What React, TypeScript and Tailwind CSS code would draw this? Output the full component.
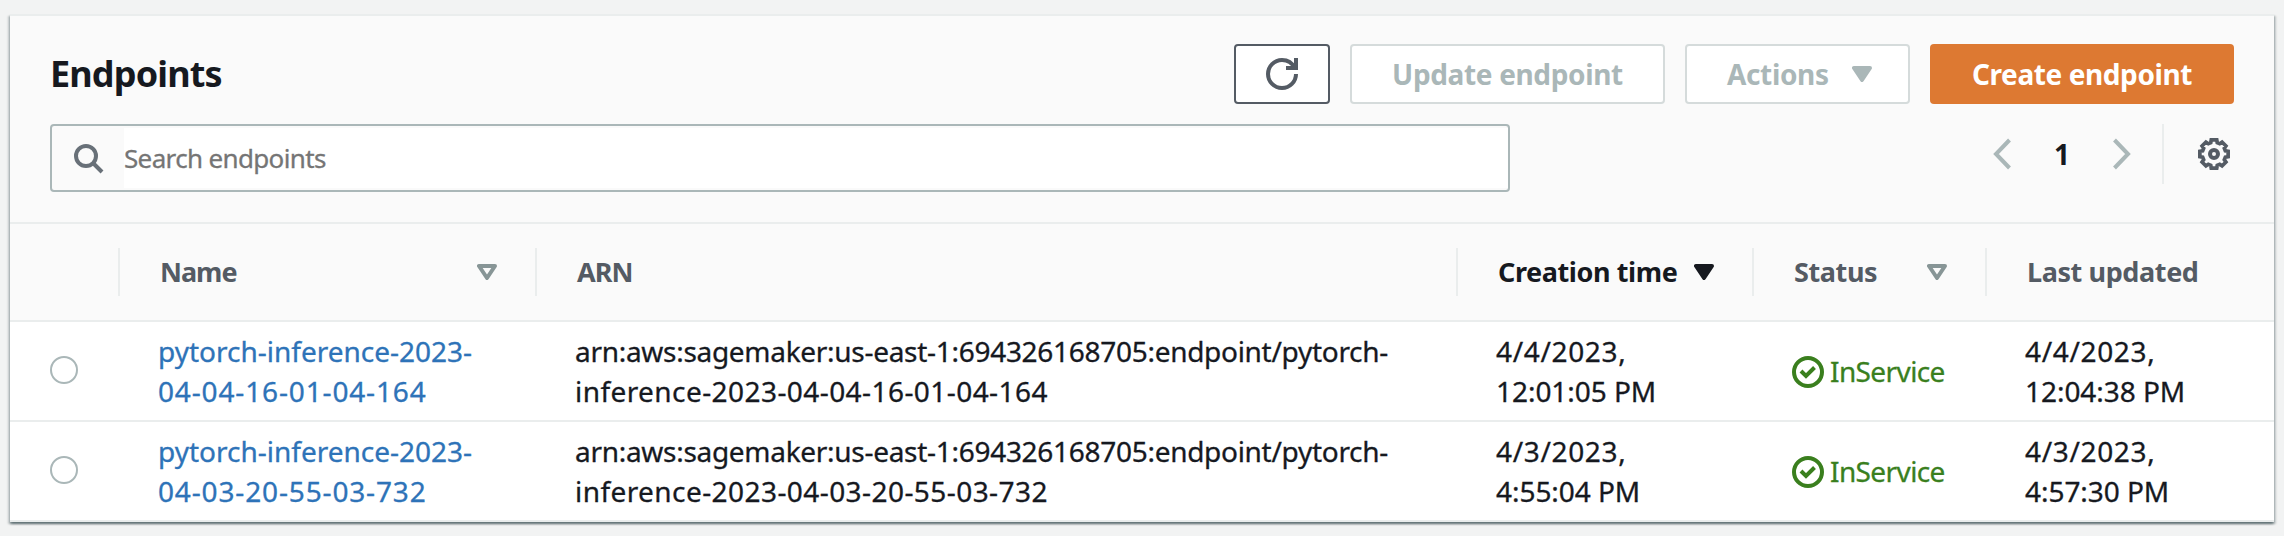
import type { ReactNode } from "react";

const columns = "grid grid-cols-[108px_417px_921px_296px_233px_289px]";

function RefreshIcon() {
  return (
    <svg className="size-8" viewBox="0 0 16 16" fill="none" stroke="#545b64" strokeWidth="2">
      <path d="M15 8c0 3.87-3.13 7-7 7s-7-3.13-7-7 3.13-7 7-7c2.79 0 5.2 1.63 6.33 4" />
      <path d="M10 5h5V0" />
    </svg>
  );
}

function SearchIcon() {
  return (
    <svg className="size-8" viewBox="0 0 32 32" fill="none" stroke="#687078" strokeWidth="4">
      <circle cx="14" cy="14" r="10" />
      <path d="M21 21l9 9" />
    </svg>
  );
}

function ChevronIcon({ flipped = false }: { flipped?: boolean }) {
  return (
    <svg
      className={flipped ? "h-8 w-5 -scale-x-100" : "h-8 w-5"}
      viewBox="0 0 20 32"
      fill="none"
      stroke="#aab7b8"
      strokeWidth="4"
    >
      <path d="M17.5 2L4 16l13.5 14" />
    </svg>
  );
}

const gearPoints = Array.from({ length: 8 }, (_, i) =>
  [
    [-11, 14.4],
    [11, 14.4],
    [16, 11.8],
    [29, 11.8],
  ].map(([offset, radius]) => {
    const angle = ((i * 45 + offset - 90) * Math.PI) / 180;
    return `${(16 + radius * Math.cos(angle)).toFixed(2)},${(16 + radius * Math.sin(angle)).toFixed(2)}`;
  }),
)
  .flat()
  .join(" ");

function GearIcon() {
  return (
    <svg className="size-8" viewBox="0 0 32 32" fill="none" stroke="#545b64" strokeWidth="4">
      <polygon points={gearPoints} strokeWidth="3.7" />
      <circle cx="16" cy="16" r="4" />
    </svg>
  );
}

function SortIcon({ active = false }: { active?: boolean }) {
  return (
    <svg
      className={active ? "h-4 w-5 text-[#16191f]" : "h-4 w-5 text-[#879596]"}
      viewBox="0 0 20 16"
      fill={active ? "currentColor" : "none"}
      stroke="currentColor"
      strokeWidth="4"
      strokeLinejoin="round"
    >
      <path d="M2 2h16l-8 12z" />
    </svg>
  );
}

function CheckIcon() {
  return (
    <svg className="mt-0.5 size-8" viewBox="0 0 32 32" fill="none" stroke="#3a7f1e" strokeWidth="4">
      <circle cx="16" cy="16" r="14" />
      <path d="M9 15l5 5 8.5-8.5" />
    </svg>
  );
}

function HeaderCell({ children, icon, muted = true }: { children: ReactNode; icon?: ReactNode; muted?: boolean }) {
  return (
    <div
      className={`flex h-12 items-center justify-between border-l-2 border-[#eaeded] pl-10 text-[27px] leading-10 font-bold ${muted ? "text-[#545b64]" : "text-[#16191f]"}`}
    >
      {children}
      {icon && <div className="mr-[38px]">{icon}</div>}
    </div>
  );
}

const endpoints = [
  {
    name: ["pytorch-inference-2023-", "04-04-16-01-04-164"],
    arn: ["arn:aws:sagemaker:us-east-1:694326168705:endpoint/pytorch-", "inference-2023-04-04-16-01-04-164"],
    created: ["4/4/2023,", "12:01:05 PM"],
    updated: ["4/4/2023,", "12:04:38 PM"],
  },
  {
    name: ["pytorch-inference-2023-", "04-03-20-55-03-732"],
    arn: ["arn:aws:sagemaker:us-east-1:694326168705:endpoint/pytorch-", "inference-2023-04-03-20-55-03-732"],
    created: ["4/3/2023,", "4:55:04 PM"],
    updated: ["4/3/2023,", "4:57:30 PM"],
  },
];

function Lines({
  lines,
  className = "",
  first = "",
  last = "",
}: {
  lines: string[];
  className?: string;
  first?: string;
  last?: string;
}) {
  return (
    <div className={`pl-10 ${className}`}>
      <div className={first}>{lines[0]}</div>
      <div className={last}>{lines[1]}</div>
    </div>
  );
}

export default function App() {
  return (
    <div className="h-[536px] w-[2284px] bg-[#f2f3f3] px-2.5 pt-3.5 font-['Noto_Sans',sans-serif] whitespace-nowrap text-[#16191f]">
      <div className="border-t-2 border-[#eaeded] bg-white shadow-[0_2px_2px_0_rgba(0,28,36,0.4),2px_2px_2px_0_rgba(0,28,36,0.18),-2px_2px_2px_0_rgba(0,28,36,0.18)]">
        <div className="border-b-2 border-[#eaeded] bg-[#fafafa] px-10 pt-7 pb-[30px]">
          <div className="flex h-[60px] items-center justify-between">
            <h1 className="text-[36px] leading-[60px] font-bold tracking-[-0.85px]">Endpoints</h1>
            <div className="flex gap-5 text-[28px] font-bold">
              <button className="flex h-[60px] w-24 items-center justify-center rounded-sm border-2 border-[#545b64] bg-white">
                <RefreshIcon />
              </button>
              <button className="flex h-[60px] w-[315px] items-center justify-center rounded-sm border-2 border-[#d5dbdb] bg-white tracking-[-0.35px] text-[#aab7b8]">
                Update endpoint
              </button>
              <button className="flex h-[60px] w-[225px] items-center justify-between rounded-sm border-2 border-[#d5dbdb] bg-white pr-9 pl-10 tracking-[-0.35px] text-[#aab7b8]">
                Actions
                <svg className="h-4 w-5" viewBox="0 0 20 16" fill="#aab7b8" stroke="#aab7b8" strokeWidth="4" strokeLinejoin="round">
                  <path d="M2 2h16l-8 12z" />
                </svg>
              </button>
              <button className="flex h-[60px] w-[304px] items-center justify-center rounded-sm bg-[#dd7932] tracking-[-0.4px] text-white">
                Create endpoint
              </button>
            </div>
          </div>
          <div className="mt-5 flex justify-between">
            <div className="flex h-[68px] w-[1460px] rounded-sm border-2 border-[#aab7b8] py-0.5">
              <div className="flex w-[72px] shrink-0 items-center pl-5">
                <SearchIcon />
              </div>
              <div className="grow bg-white text-[26px] leading-[60px] tracking-[-0.65px] text-[#757575] [-webkit-text-stroke:0.3px]">
                Search endpoints
              </div>
            </div>
            <div className="flex h-[60px] items-center">
              <ChevronIcon />
              <span className="w-[100px] text-center text-[28px] leading-[60px] font-bold">1</span>
              <ChevronIcon flipped />
              <div className="ml-[30px] h-full w-0.5 bg-[#eaeded]" />
              <div className="mr-1 ml-[34px]">
                <GearIcon />
              </div>
            </div>
          </div>
        </div>

        <div className={`${columns} h-[98px] items-center border-b-2 border-[#eaeded] bg-[#fafafa]`}>
          <div />
          <HeaderCell icon={<SortIcon />}>
            <span className="tracking-[-1px]">Name</span>
          </HeaderCell>
          <HeaderCell>
            <span className="tracking-[-0.9px]">ARN</span>
          </HeaderCell>
          <HeaderCell muted={false} icon={<SortIcon active />}>
            <span className="tracking-[-0.4px]">Creation time</span>
          </HeaderCell>
          <HeaderCell icon={<SortIcon />}>
            <span className="tracking-[-0.4px]">Status</span>
          </HeaderCell>
          <HeaderCell>
            <span className="tracking-[-0.4px]">Last updated</span>
          </HeaderCell>
        </div>

        {endpoints.map((endpoint) => (
          <div
            key={endpoint.name[1]}
            className={`${columns} h-[100px] items-center border-b-2 border-[#eaeded] text-[28px] leading-10 [-webkit-text-stroke:0.3px]`}
          >
            <div className="pb-0.5 pl-10">
              <div className="size-7 rounded-full border-2 border-[#aab7b8] bg-white" />
            </div>
            <Lines lines={endpoint.name} className="text-[#2e73b8]" last="tracking-[0.85px]" />
            <Lines lines={endpoint.arn} first="tracking-[-0.29px]" last="tracking-[0.43px]" />
            <Lines lines={endpoint.created} first="tracking-[0.65px]" last="tracking-[-0.05px]" />
            <div className="flex items-center gap-1.5 pl-10 tracking-[-0.6px] text-[#3a7f1e]">
              <CheckIcon />
              InService
            </div>
            <Lines lines={endpoint.updated} first="tracking-[0.65px]" last="tracking-[-0.05px]" />
          </div>
        ))}
      </div>
    </div>
  );
}
